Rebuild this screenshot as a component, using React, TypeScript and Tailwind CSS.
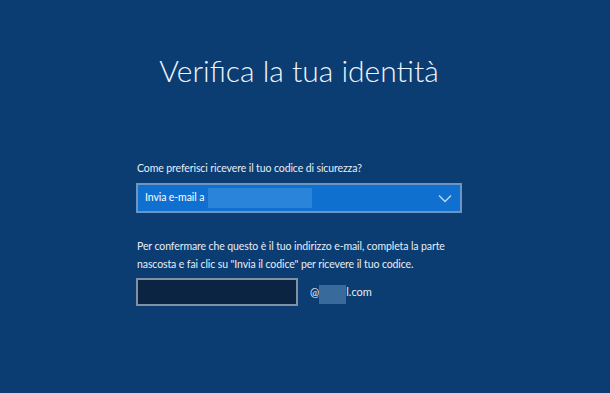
import React from 'react';

const App: React.FC = () => {
  return (
    <div className="w-[610px] h-[393px] bg-[#0b3d72] text-white overflow-hidden font-['Lato',sans-serif]">
      <div className="ml-[136px] w-[326px] pt-[50px] flex flex-col">
        {/* Title */}
        <h1 className="text-center text-[30px] leading-[40px] font-light text-[#eef4fb]">
          Verifica la tua identità
        </h1>

        {/* Method selector */}
        <p className="mt-[70px] pl-[1px] text-[10.5px] leading-[16px] tracking-[-0.1px] text-[#e8eef6]">
          Come preferisci ricevere il tuo codice di sicurezza?
        </p>
        <div className="mt-[7px] h-[30px] w-[326px] border-2 border-[#6b96c4] bg-[#1070d0] flex items-center pl-[7px] pr-[8px]">
          <span className="text-[10.5px] tracking-[-0.1px] text-white">Invia e-mail a</span>
          <span className="ml-[4px] h-[20px] w-[104px] bg-[#2a84da]" />
          <div className="flex-1" />
          <svg width="14" height="9" viewBox="0 0 14 9" fill="none">
            <path d="M1 1.5 L7 7.5 L13 1.5" stroke="#bcd8f3" strokeWidth="1.4" />
          </svg>
        </div>

        {/* Confirm text */}
        <p className="mt-[24px] pl-[1px] text-[10.5px] leading-[18px] tracking-[-0.1px] text-[#e8eef6]">
          Per confermare che questo è il tuo indirizzo e-mail, completa la parte nascosta e fai clic su "Invia il codice" per ricevere il tuo codice.
        </p>
        <div className="mt-[5px] flex items-center">
          <div className="h-[28px] w-[162px] border-2 border-[#8190a5] bg-[#0a2442]" />
          <div className="ml-[12px] flex items-center text-[11px] text-[#e8eef6]">
            <span>@</span>
            <span className="h-[19px] w-[27px] bg-[#386b9b] mt-[4px]" />
            <span>l.com</span>
          </div>
        </div>
      </div>
    </div>
  );
};

export default App;
